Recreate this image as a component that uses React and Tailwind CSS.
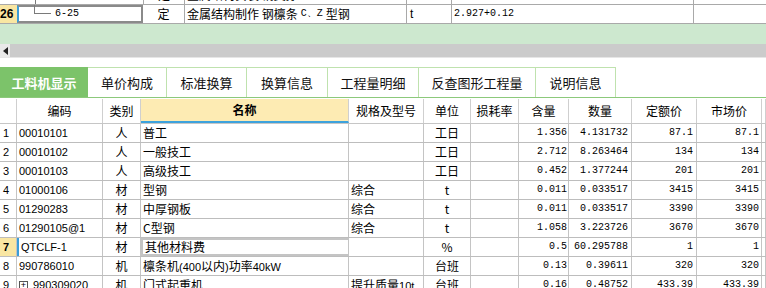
import React from 'react';

const topCols = ['w-[17px]', 'w-[126px]', 'w-[41px]', 'w-[222px]', 'w-[45px]', 'w-[242px]', 'w-[73px]'];

const tabs = ['工料机显示', '单价构成', '标准换算', '换算信息', '工程量明细', '反查图形工程量', '说明信息'];
const tabWidths = ['w-[88px]', 'w-[79px]', 'w-[80px]', 'w-[81px]', 'w-[91px]', 'w-[117px]', 'w-[80px]'];

const cols = ['w-[17px]', 'w-[86px]', 'w-[38px]', 'w-[208px]', 'w-[75px]', 'w-[47px]', 'w-[48px]', 'w-[50px]', 'w-[63px]', 'w-[65px]', 'w-[65px]', 'w-[4px]'];
const align = [
  'justify-start pl-[3px]',
  'justify-start pl-[2px]',
  'justify-center',
  'justify-start pl-[2px]',
  'justify-start pl-[2px]',
  'justify-center',
  'justify-end pr-[2px]',
  'justify-end pr-[1px]',
  'justify-end pr-[3px]',
  'justify-end pr-[3px]',
  'justify-end pr-[2px]',
  'justify-center',
];
const numCols = [6, 7, 8, 9, 10];

const headers = ['', '编码', '类别', '名称', '规格及型号', '单位', '损耗率', '含量', '数量', '定额价', '市场价', ''];

const rows = [
  ['1', '00010101', '人', '普工', '', '工日', '', '1.356', '4.131732', '87.1', '87.1'],
  ['2', '00010102', '人', '一般技工', '', '工日', '', '2.712', '8.263464', '134', '134'],
  ['3', '00010103', '人', '高级技工', '', '工日', '', '0.452', '1.377244', '201', '201'],
  ['4', '01000106', '材', '型钢', '综合', 't', '', '0.011', '0.033517', '3415', '3415'],
  ['5', '01290283', '材', '中厚钢板', '综合', 't', '', '0.011', '0.033517', '3390', '3390'],
  ['6', '01290105@1', '材', 'C型钢', '综合', 't', '', '1.058', '3.223726', '3670', '3670'],
  ['7', 'QTCLF-1', '材', '其他材料费', '', '%', '', '0.5', '60.295788', '1', '1'],
  ['8', '990786010', '机', '檩条机(400以内)功率40kW', '', '台班', '', '0.13', '0.39611', '320', '320'],
  ['9', '990309020', '机', '门式起重机', '提升质量10t', '台班', '', '0.16', '0.48752', '433.39', '433.39'],
];

const latin = "font-['Liberation_Sans',sans-serif] text-[11px]";
const mono = "font-['Liberation_Mono',monospace] text-[10px]";

const TopRows = () => (
  <div className="-mt-[14px]">
    {/* partially scrolled row */}
    <div className="flex h-[19px] border-b border-[#a9a9a9] text-[12px] leading-none">
      <div className={`${topCols[0]} shrink-0`} />
      <div className={`${topCols[1]} shrink-0 flex items-center`}>
        <div className="ml-[18px] w-px h-full bg-[#7a7a7a]" />
        <span className={`ml-[21px] ${mono}`}>6-24</span>
      </div>
      <div className={`${topCols[2]} shrink-0 border-l border-[#a9a9a9] flex items-center justify-center`}>定</div>
      <div className={`${topCols[3]} shrink-0 border-l border-[#a9a9a9] flex items-center pl-[2px]`}>金属结构安装 钢支撑</div>
      <div className={`${topCols[4]} shrink-0 border-l border-[#a9a9a9] flex items-center pl-[3px]`}>t</div>
      <div className={`${topCols[5]} shrink-0 border-l border-[#a9a9a9] flex items-center pl-[2px] ${mono}`}>1.000-0.000-0.00</div>
      <div className={`${topCols[6]} shrink-0 border-l border-[#a9a9a9]`} />
    </div>
    {/* row 26 */}
    <div className="flex h-[19px] border-b border-[#a9a9a9] text-[12px] leading-none">
      <div className={`${topCols[0]} shrink-0 bg-[#f9e6a2] flex items-center font-['Liberation_Sans',sans-serif] font-bold`}>26</div>
      <div className={`${topCols[1]} shrink-0 flex items-center border-2 border-[#8a8a8a] border-l-[#3b9dd8]`}>
        <div className="w-[17px] h-[9px] border-l border-b border-[#7a7a7a] self-start shrink-0 ml-[15px] -mt-[2px]" />
        <span className={`ml-[4px] ${mono}`}>6-25</span>
      </div>
      <div className={`${topCols[2]} shrink-0 flex items-center justify-center`}>定</div>
      <div className={`${topCols[3]} shrink-0 border-l border-[#a9a9a9] flex items-center pl-[2px] whitespace-nowrap`}>
        金属结构制作 钢檩条 <span className={`${mono} mx-[3px]`}>C、Z</span>型钢
      </div>
      <div className={`${topCols[4]} shrink-0 border-l border-[#a9a9a9] flex items-center pl-[3px] font-['Liberation_Sans',sans-serif]`}>t</div>
      <div className={`${topCols[5]} shrink-0 border-l border-[#a9a9a9] flex items-center pl-[2px] ${mono}`}>2.927+0.12</div>
      <div className={`${topCols[6]} shrink-0 border-l border-[#a9a9a9]`} />
    </div>
  </div>
);

const ScrollArea = () => (
  <div>
    <div className="h-[20px] bg-[#cde8cf]" />
    <div className="h-[13px] bg-[#cbcbcb] flex items-center">
      <div className="w-[10px] h-full bg-[#e9e9e9] flex items-center justify-center">
        <div className="w-0 h-0 border-y-[4px] border-y-transparent border-r-[5px] border-r-[#222]" />
      </div>
    </div>
    <div className="h-px bg-[#e6e6e6]" />
    <div className="h-[9px] bg-white" />
  </div>
);

const Tabs = () => (
  <div className="flex h-[31px] border-b border-[#8cc97b]">
    {tabs.map((t, i) => (
      <div
        key={t}
        className={`${tabWidths[i]} shrink-0 flex items-center justify-center text-[13px] leading-none ${
          i === 0
            ? 'bg-[#7cc36a] text-white font-bold'
            : 'bg-white text-[#111] border-t border-r border-[#bfe2ae]'
        }`}
      >
        {t}
      </div>
    ))}
  </div>
);

const HeaderRow = () => (
  <div className="flex h-[25px] mt-px border-b border-[#c6c6c6] text-[12px] leading-none">
    {headers.map((h, i) => (
      <div
        key={i}
        className={`${cols[i]} shrink-0 flex items-center justify-center border-r border-[#cfcfcf] ${
          i === 3 ? 'bg-[#fdebb3] font-bold border-b-2 border-b-[#3da2dc]' : ''
        }`}
      >
        {h}
      </div>
    ))}
  </div>
);

const DataRow = ({ row, idx }) => {
  const selected = idx === 6;
  return (
    <div className="flex h-[19px] border-b border-[#bdbdbd] text-[12px] leading-none">
      {cols.map((w, i) => {
        const v = row[i] ?? '';
        let extra = '';
        if (i === 0 && selected) extra = 'bg-[#f9e6a2] font-bold';
        if (i === 1 && selected) extra = 'border-l-2 border-l-[#3b9dd8]';
        if (i === 3 && selected) extra = 'border-2 border-[#7f7f7f]';
        const font = numCols.includes(i) ? mono : i === 0 || i === 1 ? latin : '';
        return (
          <div
            key={i}
            className={`${w} ${align[i]} ${font} ${extra} shrink-0 flex items-center border-r border-[#c4c4c4] whitespace-nowrap overflow-hidden`}
          >
            {i === 1 && idx === 8 && (
              <span className="w-[9px] h-[9px] border border-[#555] mr-[5px] flex items-center justify-center text-[9px] leading-none">+</span>
            )}
            {i === 3 && idx === 7 ? (
              <span>
                檩条机<span className={latin}>(400</span>以内<span className={latin}>)</span>功率
                <span className={latin}>40kW</span>
              </span>
            ) : i === 4 && idx === 8 ? (
              <span>
                提升质量<span className={latin}>10t</span>
              </span>
            ) : (
              v
            )}
          </div>
        );
      })}
    </div>
  );
};

export default function App() {
  return (
    <div className="w-[766px] h-[288px] overflow-hidden bg-white text-black font-['Noto_Sans_CJK_SC','Liberation_Sans',sans-serif]">
      <TopRows />
      <ScrollArea />
      <Tabs />
      <HeaderRow />
      {rows.map((r, i) => (
        <DataRow key={i} row={r} idx={i} />
      ))}
    </div>
  );
}
